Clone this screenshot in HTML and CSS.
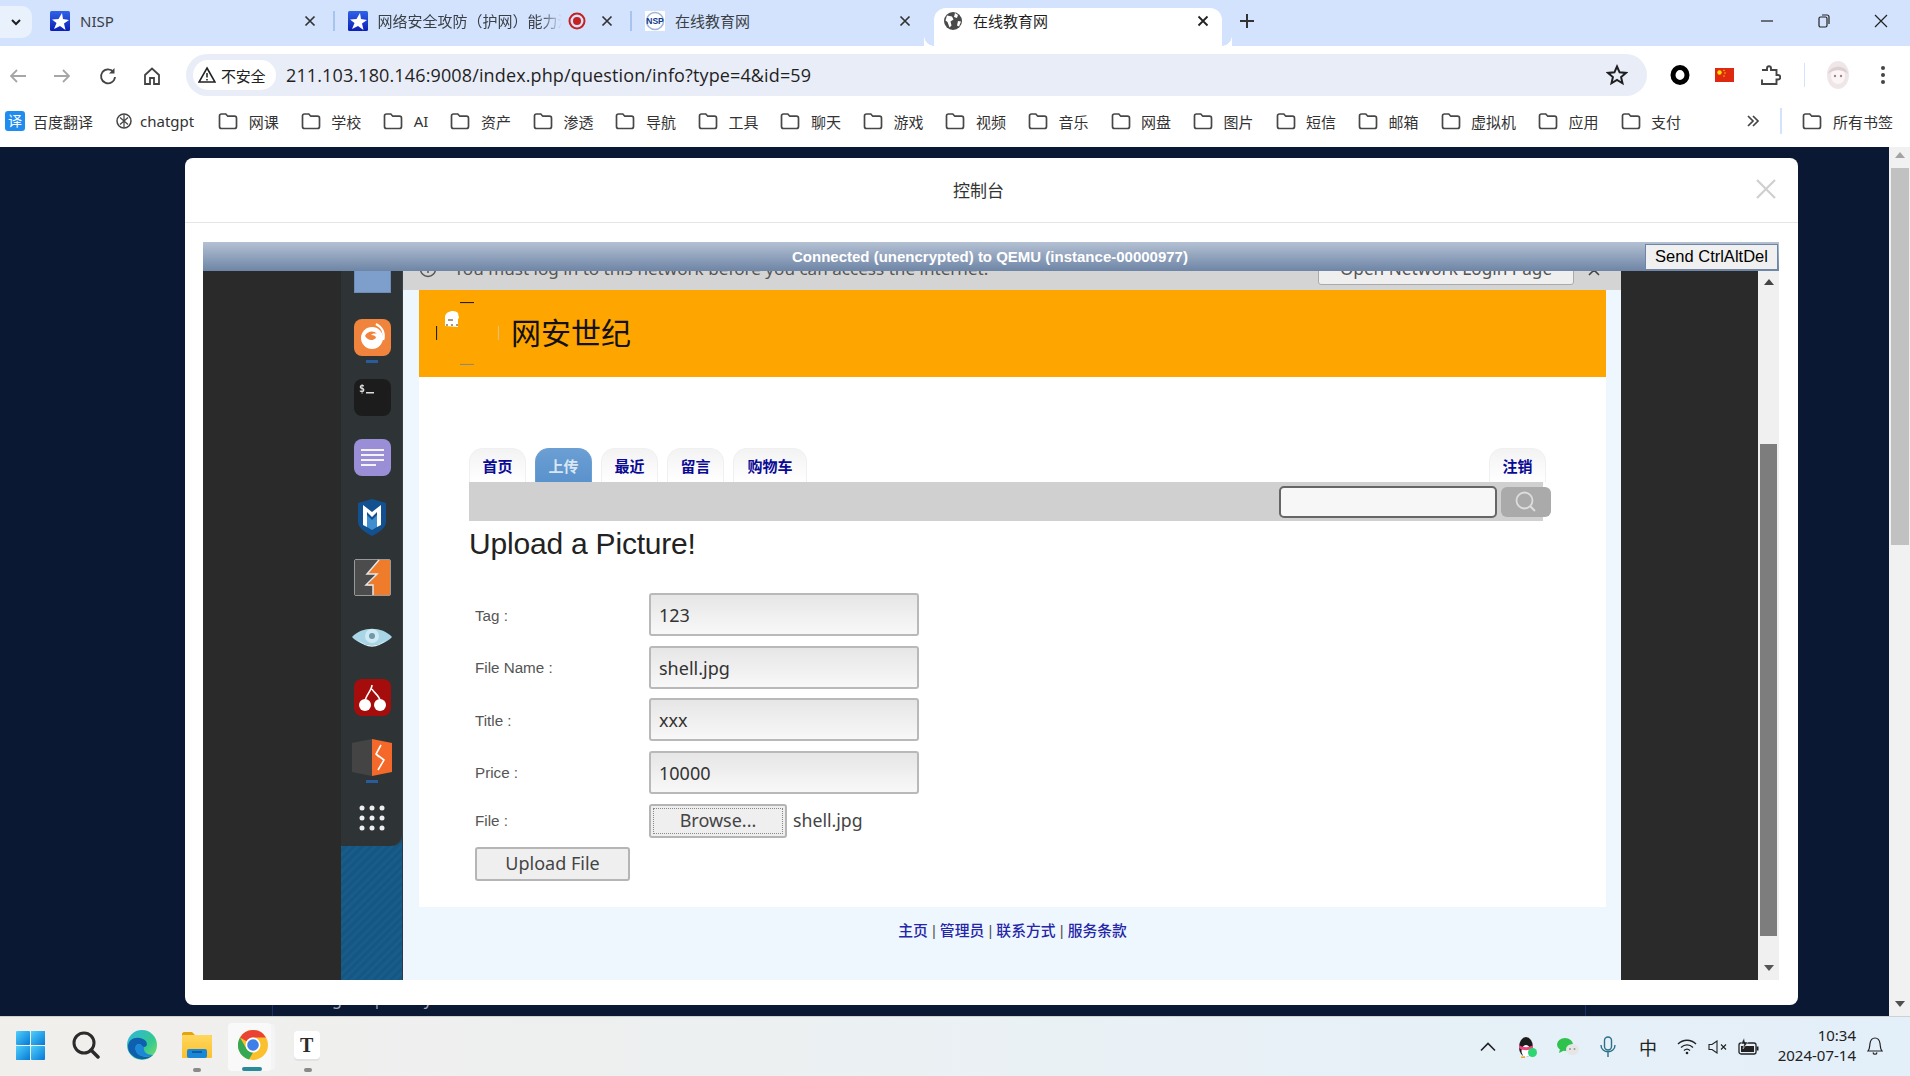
FILE: index.html
```html
<!DOCTYPE html>
<html lang="zh">
<head>
<meta charset="utf-8">
<title>在线教育网</title>
<link rel="stylesheet" href="styles.css">
</head>
<body>
<svg class="defs" width="0" height="0">
  <defs>
    <linearGradient id="nisp" x1="0" y1="0" x2="0" y2="1"><stop offset="0" stop-color="#2f63e8"/><stop offset="1" stop-color="#0c1fb8"/></linearGradient>
    <linearGradient id="win" x1="0" y1="0" x2="1" y2="1"><stop offset="0" stop-color="#4fd0fb"/><stop offset="1" stop-color="#0678d6"/></linearGradient>
    <linearGradient id="edge" x1="0" y1="0" x2="1" y2="1"><stop offset="0" stop-color="#2fb5e0"/><stop offset=".6" stop-color="#35c98f"/><stop offset="1" stop-color="#7fe06a"/></linearGradient>
    <linearGradient id="fold" x1="0" y1="0" x2="0" y2="1"><stop offset="0" stop-color="#ffd75e"/><stop offset="1" stop-color="#fbc02d"/></linearGradient>
    <symbol id="i-nisp" viewBox="0 0 20 20"><rect width="20" height="20" rx="1.5" fill="url(#nisp)"/><path d="M12 2l1 6 6 1-5 3.500 1.500 6.500-5.500-4-6 3 2.500-6L2 8.500l6.500-.5z" fill="#fff"/></symbol>
    <symbol id="i-folder" viewBox="0 0 20 18"><path d="M1.500 4C1.500 2.800 2.300 2 3.500 2h4.300l2 2.200h6.700c1.200 0 2 .8 2 2V14.500c0 1.200-.8 2-2 2h-13c-1.200 0-2-.8-2-2z" fill="none" stroke="#474747" stroke-width="1.700"/></symbol>
  </defs>
</svg>

<div class="browser">
  <div class="tabstrip">
    <div class="tab-menu"><svg width="14" height="14" viewBox="0 0 14 14"><path d="M3 5l4 4 4-4" fill="none" stroke="#1f1f1f" stroke-width="2"/></svg></div>
    <div class="tab">
      <svg class="fav" width="20" height="20"><use href="#i-nisp"/></svg>
      <span class="tab-title">NISP</span>
      <svg class="tab-x" width="12" height="12" viewBox="0 0 12 12"><path d="M1.500 1.500l9 9M10.500 1.500l-9 9" stroke="#333" stroke-width="1.700"/></svg>
    </div>
    <i class="tab-sep"></i>
    <div class="tab">
      <svg class="fav" width="20" height="20"><use href="#i-nisp"/></svg>
      <span class="tab-title tab-fade">网络安全攻防（护网）能力演练</span>
      <svg class="rec" width="18" height="18" viewBox="0 0 18 18"><circle cx="9" cy="9" r="7.500" fill="none" stroke="#c5221f" stroke-width="2"/><circle cx="9" cy="9" r="4" fill="#c5221f"/></svg>
      <svg class="tab-x tab-x-near" width="12" height="12" viewBox="0 0 12 12"><path d="M1.500 1.500l9 9M10.500 1.500l-9 9" stroke="#333" stroke-width="1.700"/></svg>
    </div>
    <i class="tab-sep"></i>
    <div class="tab">
      <svg class="fav" width="20" height="20" viewBox="0 0 20 20"><rect width="20" height="20" fill="#fff"/><circle cx="10" cy="10" r="8.500" fill="none" stroke="#9fb6d8" stroke-width="1.500"/><text x="10" y="13" font-size="8.500" font-weight="700" text-anchor="middle" fill="#0f3a8c" font-family="Liberation Sans">NSP</text></svg>
      <span class="tab-title">在线教育网</span>
      <svg class="tab-x" width="12" height="12" viewBox="0 0 12 12"><path d="M1.500 1.500l9 9M10.500 1.500l-9 9" stroke="#333" stroke-width="1.700"/></svg>
    </div>
    <i class="tab-gap"></i>
    <div class="tab tab-active">
      <svg class="fav fav-globe" width="18" height="18" viewBox="0 0 18 18"><circle cx="9" cy="9" r="9" fill="#4a4a4a"/><path d="M3 3.500l5 1 1.500 3-3 2 1 4-2 2-2-5.500-2-1.500zM11 1l3 2-1 3-3-1zM14 9l3 .500-2 5-2-1z" fill="#fff"/></svg>
      <span class="tab-title">在线教育网</span>
      <svg class="tab-x" width="12" height="12" viewBox="0 0 12 12"><path d="M1.500 1.500l9 9M10.500 1.500l-9 9" stroke="#222" stroke-width="1.800"/></svg>
    </div>
    <div class="tab-new"><svg width="16" height="16" viewBox="0 0 16 16"><path d="M8 1v14M1 8h14" stroke="#333" stroke-width="2"/></svg></div>
    <div class="win-ctrls">
      <svg width="14" height="14" viewBox="0 0 14 14"><path d="M1 7h12" stroke="#222" stroke-width="1.200"/></svg>
      <svg width="14" height="16" viewBox="0 0 14 16"><rect x="2" y="4" width="8" height="10" rx="1.500" fill="none" stroke="#222" stroke-width="1.200"/><path d="M5 2h5c1.500 0 2 .5 2 2v7" fill="none" stroke="#222" stroke-width="1.200"/></svg>
      <svg width="14" height="14" viewBox="0 0 14 14"><path d="M1 1l12 12M13 1L1 13" stroke="#222" stroke-width="1.200"/></svg>
    </div>
  </div>

  <div class="toolbar">
    <svg class="nav-ic nav-back" width="20" height="20" viewBox="0 0 20 20"><path d="M18 10H3M9 4l-6 6 6 6" fill="none" stroke="#a6a6a6" stroke-width="1.800"/></svg>
    <svg class="nav-ic nav-fwd" width="20" height="20" viewBox="0 0 20 20"><path d="M2 10h15M11 4l6 6-6 6" fill="none" stroke="#a6a6a6" stroke-width="1.800"/></svg>
    <svg class="nav-ic nav-reload" width="20" height="20" viewBox="0 0 20 20"><path d="M15.500 6A7 7 0 1 0 17 11" fill="none" stroke="#444" stroke-width="1.800"/><path d="M16.500 2v5.500H11z" fill="#444"/></svg>
    <svg class="nav-ic nav-home" width="20" height="20" viewBox="0 0 20 20"><path d="M3 9l7-6.500L17 9v9h-5v-6H8v6H3z" fill="none" stroke="#444" stroke-width="1.800"/></svg>
    <div class="omnibox">
      <div class="chip">
        <svg width="18" height="18" viewBox="0 0 18 18"><path d="M9 2l8 14H1z" fill="none" stroke="#222" stroke-width="1.600"/><path d="M9 7v4.500M9 13v1.500" stroke="#222" stroke-width="1.500"/></svg>
        <span>不安全</span>
      </div>
      <span class="url">211.103.180.146:9008/index.php/question/info?type=4&amp;id=59</span>
      <svg class="star" width="22" height="22" viewBox="0 0 22 22"><path d="M11 2.500l2.600 5.800 6.300.6-4.800 4.200 1.400 6.200L11 16l-5.500 3.300 1.400-6.200L2.100 8.900l6.300-.6z" fill="none" stroke="#1f1f1f" stroke-width="2"/></svg>
    </div>
    <div class="ext">
      <svg class="ext-ring" width="20" height="20" viewBox="0 0 20 20"><ellipse cx="10" cy="10" rx="7" ry="7.500" fill="none" stroke="#000" stroke-width="5"/></svg>
      <svg class="ext-flag" width="19" height="14" viewBox="0 0 19 14"><rect width="19" height="14" fill="#de2910"/><circle cx="4.500" cy="4.500" r="2.200" fill="#ffde00"/><circle cx="9" cy="2.500" r=".7" fill="#ffde00"/><circle cx="10" cy="5" r=".7" fill="#ffde00"/><circle cx="9" cy="8" r=".7" fill="#ffde00"/></svg>
      <svg class="ext-puzzle" width="22" height="22" viewBox="0 0 22 22"><path d="M3 6h5V4.500c0-3 4-3 4 0V6h5.500v5H19c3 0 3 4.500 0 4.500h-1.500V20H3v-4.500" fill="none" stroke="#444" stroke-width="1.900"/></svg>
      <i class="ext-sep"></i>
      <svg class="ext-avatar" width="26" height="30" viewBox="0 0 26 30"><ellipse cx="13" cy="15" rx="11" ry="14" fill="#efe6e8"/><ellipse cx="13" cy="16" rx="7" ry="8" fill="#fbf6f6"/><circle cx="10" cy="16" r="1.200" fill="#b27a88"/><circle cx="16" cy="16" r="1.200" fill="#b27a88"/><path d="M3 14c2-9 18-10 20 0-5-5-15-5-20 0z" fill="#ddd0d3"/></svg>
      <svg class="ext-menu" width="6" height="20" viewBox="0 0 6 20"><circle cx="3" cy="3" r="2" fill="#444"/><circle cx="3" cy="10" r="2" fill="#444"/><circle cx="3" cy="17" r="2" fill="#444"/></svg>
    </div>
  </div>

  <div class="bookmarks">
    <div class="bm bm-first"><span class="bm-yi">译</span><span>百度翻译</span></div>
    <div class="bm bm-gpt"><svg width="18" height="18" viewBox="0 0 18 18"><circle cx="9" cy="9" r="7" fill="none" stroke="#444" stroke-width="1.500"/><path d="M5 5.500l8 7M13 5.500l-8 7M9 2.500v13" stroke="#444" stroke-width="1.200"/></svg><span>chatgpt</span></div>
    <div class="bm"><svg width="20" height="18"><use href="#i-folder"/></svg><span>网课</span></div>
    <div class="bm"><svg width="20" height="18"><use href="#i-folder"/></svg><span>学校</span></div>
    <div class="bm"><svg width="20" height="18"><use href="#i-folder"/></svg><span>AI</span></div>
    <div class="bm"><svg width="20" height="18"><use href="#i-folder"/></svg><span>资产</span></div>
    <div class="bm"><svg width="20" height="18"><use href="#i-folder"/></svg><span>渗透</span></div>
    <div class="bm"><svg width="20" height="18"><use href="#i-folder"/></svg><span>导航</span></div>
    <div class="bm"><svg width="20" height="18"><use href="#i-folder"/></svg><span>工具</span></div>
    <div class="bm"><svg width="20" height="18"><use href="#i-folder"/></svg><span>聊天</span></div>
    <div class="bm"><svg width="20" height="18"><use href="#i-folder"/></svg><span>游戏</span></div>
    <div class="bm"><svg width="20" height="18"><use href="#i-folder"/></svg><span>视频</span></div>
    <div class="bm"><svg width="20" height="18"><use href="#i-folder"/></svg><span>音乐</span></div>
    <div class="bm"><svg width="20" height="18"><use href="#i-folder"/></svg><span>网盘</span></div>
    <div class="bm"><svg width="20" height="18"><use href="#i-folder"/></svg><span>图片</span></div>
    <div class="bm"><svg width="20" height="18"><use href="#i-folder"/></svg><span>短信</span></div>
    <div class="bm"><svg width="20" height="18"><use href="#i-folder"/></svg><span>邮箱</span></div>
    <div class="bm"><svg width="20" height="18"><use href="#i-folder"/></svg><span>虚拟机</span></div>
    <div class="bm"><svg width="20" height="18"><use href="#i-folder"/></svg><span>应用</span></div>
    <div class="bm"><svg width="20" height="18"><use href="#i-folder"/></svg><span>支付</span></div>
    <svg class="bm-more" width="14" height="14" viewBox="0 0 14 14"><path d="M2 2l5 5-5 5M7 2l5 5-5 5" fill="none" stroke="#444" stroke-width="1.700"/></svg>
    <i class="bm-sep"></i>
    <div class="bm bm-all"><svg width="20" height="18"><use href="#i-folder"/></svg><span>所有书签</span></div>
  </div>

  <div class="viewport">
    <div class="behind">
      <i class="behind-line behind-l"></i>
      <span class="behind-text">gt&nbsp;&nbsp;&nbsp;&nbsp;&nbsp;&nbsp;|=&nbsp;&nbsp;&nbsp;&nbsp;&nbsp;&nbsp;&nbsp;&nbsp;y</span>
      <i class="behind-line behind-r"></i>
    </div>
    <div class="page-scroll">
      <svg class="arrow" width="12" height="8" viewBox="0 0 12 8"><path d="M6 1l5 6H1z" fill="#a3a3a3"/></svg>
      <div class="page-thumb"></div>
      <svg class="arrow arrow-end" width="12" height="8" viewBox="0 0 12 8"><path d="M6 7L1 1h10z" fill="#505050"/></svg>
    </div>

    <div class="modal">
      <div class="modal-head">
        <span class="modal-title">控制台</span>
        <svg class="modal-x" width="20" height="20" viewBox="0 0 20 20"><path d="M1 1l18 18M19 1L1 19" stroke="#cfcfcf" stroke-width="2.200"/></svg>
      </div>
      <div class="modal-body">
        <div class="vnc">
          <div class="vnc-status">
            <span class="vnc-text">Connected (unencrypted) to QEMU (instance-00000977)</span>
            <button class="vnc-send">Send CtrlAltDel</button>
          </div>
          <div class="vnc-screen">
            <div class="black black-l"></div>
            <div class="dock-col">
              <div class="dock">
                <div class="dock-item dock-first"><div class="dock-files"></div></div>
                <div class="dock-item dock-run">
                  <svg width="37" height="37" viewBox="0 0 37 37"><rect width="37" height="37" rx="8" fill="#f0843c"/><circle cx="18" cy="19" r="11" fill="#fff"/><path d="M11 17c2-5 9-6 12-2-3-1-5 0-6 1 3 0 5 1 5 3-3 3-8 3-11-2z" fill="#f0843c"/><path d="M22 5c6 3 9 9 7 16" fill="none" stroke="#fff" stroke-width="2.500"/></svg>
                </div>
                <div class="dock-item">
                  <svg width="37" height="37" viewBox="0 0 37 37"><rect width="37" height="37" rx="8" fill="#1c1c1c"/><text x="5" y="13" font-size="10" font-weight="700" fill="#ddd" font-family="DejaVu Sans Mono">$</text><rect x="12" y="13" width="8" height="1.500" fill="#ddd"/></svg>
                </div>
                <div class="dock-item">
                  <svg width="37" height="37" viewBox="0 0 37 37"><rect width="37" height="37" rx="8" fill="#9a8fd6"/><path d="M7 11h23M7 16h23M7 21h23M7 26h15" stroke="#f4f2fb" stroke-width="2"/></svg>
                </div>
                <div class="dock-item">
                  <svg width="32" height="37" viewBox="0 0 32 37"><path d="M16 0l14 4v19c0 6-8 11-14 14C10 34 2 29 2 23V4z" fill="#12508f"/><path d="M7 26V6l9 7 9-7v20l-4 2V13l-5 5-5-5v15z" fill="#fff"/><path d="M11 16l5 5 5-5v12l-5 3-5-3z" fill="#3f8fd0"/></svg>
                </div>
                <div class="dock-item">
                  <svg width="37" height="37" viewBox="0 0 37 37"><rect x=".5" y=".5" width="36" height="36" rx="1.500" fill="#ef7c2b" stroke="#999"/><path d="M1 1h24l-12 14h10L13 27h6v9H1z" fill="#4c4c4c"/><path d="M25 1L13 15h10L12 26h7v10" fill="none" stroke="#e6e6e6" stroke-width="1.500"/></svg>
                </div>
                <div class="dock-item">
                  <svg width="40" height="22" viewBox="0 0 40 22"><path d="M0 11C10 0 30 0 40 11 30 22 10 22 0 11z" fill="#a8d6e6"/><circle cx="20" cy="10" r="7" fill="#cfeaf3"/><circle cx="20" cy="10" r="3" fill="#6f98aa"/><path d="M6 14c8 7 20 7 28 0-8 9-20 9-28 0z" fill="#e5f5fa"/></svg>
                </div>
                <div class="dock-item">
                  <svg width="37" height="37" viewBox="0 0 37 37"><rect width="37" height="37" rx="8" fill="#a50d0d"/><circle cx="11" cy="26" r="6" fill="#fff"/><circle cx="26" cy="26" r="6" fill="#fff"/><path d="M18 6c0 5-6 10-7 16M18 10c2 4 8 7 8 12" fill="none" stroke="#fff" stroke-width="1.600"/></svg>
                </div>
                <div class="dock-item dock-run">
                  <svg width="40" height="37" viewBox="0 0 40 37"><path d="M0 4l20-4v37L0 33z" fill="#444"/><path d="M20 0l20 4v29l-20 4z" fill="#f4682a"/><path d="M29 6l-5 9 8 6-6 10M24 15l3 3" fill="none" stroke="#fff" stroke-width="1.600"/></svg>
                </div>
                <div class="dock-item dock-grid">
                  <svg width="26" height="26" viewBox="0 0 26 26"><g fill="#eee"><circle cx="3" cy="3" r="2.500"/><circle cx="13" cy="3" r="2.500"/><circle cx="23" cy="3" r="2.500"/><circle cx="3" cy="13" r="2.500"/><circle cx="13" cy="13" r="2.500"/><circle cx="23" cy="13" r="2.500"/><circle cx="3" cy="23" r="2.500"/><circle cx="13" cy="23" r="2.500"/><circle cx="23" cy="23" r="2.500"/></g></svg>
                </div>
              </div>
              <div class="wallpaper"></div>
            </div>
            <div class="guest">
              <div class="notif">
                <svg class="notif-ic" width="18" height="18" viewBox="0 0 18 18"><circle cx="9" cy="9" r="7.500" fill="none" stroke="#555" stroke-width="1.500"/><path d="M9 8v5M9 5v1.500" stroke="#555" stroke-width="1.500"/></svg>
                <span class="notif-text">You must log in to this network before you can access the internet.</span>
                <button class="notif-btn">Open Network Login Page</button>
                <svg class="notif-x" width="12" height="12" viewBox="0 0 12 12"><path d="M1 1l10 10M11 1L1 11" stroke="#444" stroke-width="1.600"/></svg>
              </div>
              <div class="site">
                <header class="site-head">
                  <svg class="site-logo" width="63" height="63" viewBox="0 0 63 63"><path d="M24 .5h14" stroke="#222" stroke-width="1.200"/><path d="M.5 24v14" stroke="#222" stroke-width="1.200"/><path d="M62.500 24v14" stroke="#e2c27a" stroke-width="1.200"/><path d="M24 62.500h14" stroke="#8f8a72" stroke-width="1.200"/><path d="M9 24v-9c0-6 10-8 13-4l1 5-1 1v8z" fill="#fff"/><path d="M12 17h5v2h-5zM10 24h2v-2h-2zM15 24h2v-2h-2zM20 24h2v-2h-2z" fill="#a89a80"/></svg>
                  <h1 class="site-name">网安世纪</h1>
                </header>
                <main class="site-main">
                  <nav class="nav-tabs">
                    <a class="nt">首页</a>
                    <a class="nt nt-on">上传</a>
                    <a class="nt">最近</a>
                    <a class="nt">留言</a>
                    <a class="nt nt-wide">购物车</a>
                    <a class="nt nt-end">注销</a>
                  </nav>
                  <div class="search-bar">
                    <div class="search-input"></div>
                    <div class="search-btn"><svg width="24" height="24" viewBox="0 0 24 24"><circle cx="10.500" cy="10.500" r="8" fill="none" stroke="#ddd" stroke-width="1.800"/><path d="M16 16l5 5" stroke="#ddd" stroke-width="2"/></svg></div>
                  </div>
                  <h2 class="up-title">Upload a Picture!</h2>
                  <form class="up-form">
                    <div class="row"><label class="lb">Tag :</label><div class="field">123</div></div>
                    <div class="row"><label class="lb">File Name :</label><div class="field">shell.jpg</div></div>
                    <div class="row"><label class="lb">Title :</label><div class="field">xxx</div></div>
                    <div class="row"><label class="lb">Price :</label><div class="field">10000</div></div>
                    <div class="row row-file"><label class="lb">File :</label><div class="browse"><span class="browse-in">Browse...</span></div><span class="fname">shell.jpg</span></div>
                    <div class="upload">Upload File</div>
                  </form>
                </main>
                <footer class="site-foot">
                  <a>主页</a> | <a>管理员</a> | <a>联系方式</a> | <a>服务条款</a>
                </footer>
              </div>
            </div>
            <div class="black black-r"></div>
            <div class="guest-scroll">
              <svg class="g-arrow" width="12" height="8" viewBox="0 0 12 8"><path d="M6 1l5 6H1z" fill="#444"/></svg>
              <div class="guest-thumb"></div>
              <svg class="g-arrow" width="12" height="8" viewBox="0 0 12 8"><path d="M6 7L1 1h10z" fill="#555"/></svg>
            </div>
          </div>
        </div>
      </div>
    </div>
  </div>

  <div class="taskbar">
    <div class="tb-slot">
      <svg width="29" height="29" viewBox="0 0 29 29"><rect width="14" height="14" rx="1" fill="url(#win)"/><rect x="15" width="14" height="14" fill="url(#win)"/><rect y="15" width="14" height="14" fill="url(#win)"/><rect x="15" y="15" width="14" height="14" rx="1" fill="url(#win)"/></svg>
    </div>
    <div class="tb-slot">
      <svg width="28" height="28" viewBox="0 0 28 28"><circle cx="12" cy="12" r="10" fill="none" stroke="#2b2b2b" stroke-width="3"/><path d="M19 19l7 7" stroke="#2b2b2b" stroke-width="3.500" stroke-linecap="round"/></svg>
    </div>
    <div class="tb-slot">
      <svg width="30" height="30" viewBox="0 0 30 30"><circle cx="15" cy="15" r="15" fill="url(#edge)"/><path d="M1 17C1 8 10 6 16 9c5 2 5 8 1 8-3 0-2-3-5-3-4 0-5 6-1 10 4 3 10 4 15 1-5 5-14 6-20 1-3-2-5-5-5-9z" fill="#0f5fb0"/><path d="M12 14c3 0 2 3 5 3-1 5 3 8 9 8-5 3-11 2-15-1-4-4-3-10 1-10z" fill="#1b87d6"/></svg>
    </div>
    <div class="tb-slot tb-dot">
      <svg width="30" height="28" viewBox="0 0 30 28"><path d="M0 3c0-1 1-2 2-2h8l3 3h17v6H0z" fill="#e2a40f"/><rect y="4" width="30" height="23" rx="1" fill="url(#fold)"/><rect x="5" y="18" width="20" height="9" rx="2" fill="#1a86d8"/><path d="M10 21h10" stroke="#0a4f8f" stroke-width="1.500"/></svg>
    </div>
    <div class="tb-slot tb-active">
      <svg width="30" height="30" viewBox="0 0 30 30"><circle cx="15" cy="15" r="15" fill="#fbc02d"/><path d="M15 0a15 15 0 0 1 13 7.500H15A7.500 7.500 0 0 0 8.500 11.300L2 7.500A15 15 0 0 1 15 0z" fill="#ea4335"/><path d="M2 7.500l6.500 11.300A7.500 7.500 0 0 0 15 22.500l-4 7.100A15 15 0 0 1 2 7.500z" fill="#34a853"/><circle cx="15" cy="15" r="7.500" fill="#fff"/><circle cx="15" cy="15" r="5.800" fill="#3f7fe8"/></svg>
    </div>
    <div class="tb-slot tb-dot">
      <div class="typora">T</div>
    </div>

    <div class="tray">
      <div class="tr tr-w40"><svg width="16" height="10" viewBox="0 0 16 10"><path d="M1 8.500l7-7 7 7" fill="none" stroke="#222" stroke-width="1.600"/></svg></div>
      <div class="tr tr-w40">
        <svg width="20" height="22" viewBox="0 0 20 22"><ellipse cx="8" cy="11" rx="7" ry="10" fill="#1c1c1c"/><ellipse cx="8" cy="15" rx="4.500" ry="6" fill="#fff"/><path d="M1 9c4 3 10 3 14 0v3c-4 3-10 3-14 0z" fill="#f0457c"/><circle cx="14.500" cy="16.500" r="4.500" fill="#2ed573"/><path d="M3 20.500h4V22H3z" fill="#f5a623"/></svg>
      </div>
      <div class="tr tr-w40">
        <svg width="22" height="19" viewBox="0 0 22 19"><ellipse cx="8" cy="7.500" rx="8" ry="6.500" fill="#2fc24c"/><path d="M3 12l-1 4 5-2.500z" fill="#2fc24c"/><ellipse cx="15.500" cy="12.500" rx="6.500" ry="5.500" fill="#e6e6e6"/><circle cx="13" cy="12" r="1" fill="#999"/><circle cx="17.500" cy="12" r="1" fill="#999"/></svg>
      </div>
      <div class="tr tr-w40"><svg width="16" height="22" viewBox="0 0 16 22"><rect x="4.500" y="1" width="7" height="13" rx="3.500" fill="none" stroke="#2c7188" stroke-width="1.400"/><path d="M1 9c0 9 14 9 14 0M8 16v5" fill="none" stroke="#2c7188" stroke-width="1.400"/></svg></div>
      <div class="tr tr-w40 tr-zh">中</div>
      <div class="tr tr-w37"><svg width="20" height="16" viewBox="0 0 20 16"><path d="M1 5c5-5 13-5 18 0M4 8.500c3.500-3.500 8.500-3.500 12 0M7 11.500c2-1.800 4-1.800 6 0" fill="none" stroke="#222" stroke-width="1.300"/><circle cx="10" cy="14" r="1.300" fill="#222"/></svg></div>
      <div class="tr tr-w26"><svg width="20" height="14" viewBox="0 0 20 14"><path d="M1 4.500h3L9 1v12L4 9.500H1z" fill="none" stroke="#222" stroke-width="1.100"/><path d="M13 4.500l5 5M18 4.500l-5 5" stroke="#222" stroke-width="1.100"/></svg></div>
      <div class="tr tr-w34"><svg width="21" height="18" viewBox="0 0 21 18"><rect x="1" y="5" width="17" height="11" rx="2" fill="none" stroke="#222" stroke-width="1.300"/><rect x="3" y="8" width="13" height="6" fill="#222"/><rect x="18.500" y="8.500" width="2" height="4" fill="#222"/><path d="M6 0L3 6h3l-1 5 5-7H7z" fill="#222" stroke="#eaf2f8" stroke-width=".5"/></svg></div>
      <div class="clock"><div>10:34</div><div>2024-07-14</div></div>
      <div class="tr tr-w38"><svg width="16" height="19" viewBox="0 0 16 19"><path d="M1 14c2-2 1.500-5 2-7.500C3.500 3 5.500 1 8 1s4.500 2 5 5.500c.5 2.500 0 5.500 2 7.500z" fill="none" stroke="#222" stroke-width="1.200"/><path d="M6 15.500c.5 2.300 3.500 2.300 4 0" fill="none" stroke="#222" stroke-width="1.200"/></svg></div>
    </div>
  </div>
</div>
</body>
</html>
```
FILE: styles.css
```css
* { box-sizing: border-box; }
html, body { margin: 0; padding: 0; }
body {
  width: 1910px;
  height: 1076px;
  overflow: hidden;
  font-family: "Noto Sans", "Noto Sans CJK SC", sans-serif;
  color: #1f1f1f;
  background: #fff;
}
.defs { position: absolute; }
.browser { display: flex; flex-direction: column; height: 1076px; }

/* tab strip */
.tabstrip {
  height: 46px;
  flex: none;
  background: #d3e3fd;
  display: flex;
  align-items: flex-end;
  position: relative;
}
.tab-menu {
  width: 32px;
  height: 32px;
  margin: 0 9px 8px 0;
  align-self: flex-end;
  background: #e9f1fd;
  border-radius: 0 10px 10px 0;
  display: flex;
  align-items: center;
  justify-content: center;
}
.tab {
  width: 288px;
  height: 38px;
  display: flex;
  align-items: center;
  padding: 0 0 12px 9px;
  font-size: 15px;
  color: #333;
  flex: none;
  position: relative;
}
.fav { flex: none; margin-right: 10px; }
.fav-globe { margin: 0 11.400px 0 1px; }
.tab-title { flex: 1; white-space: nowrap; overflow: hidden; color: #3a3f46; line-height: 20px; }
.tab-fade {
  flex: none;
  width: 184px;
  -webkit-mask-image: linear-gradient(90deg, #000 88%, transparent);
  mask-image: linear-gradient(90deg, #000 88%, transparent);
}
.rec { flex: none; margin: 0 0 0 6px; }
.tab-x { flex: none; margin: 0 13px 0 4px; }
.tab-x-near { margin-left: 15px; }
.tab-sep {
  flex: none;
  width: 2px;
  height: 20px;
  margin: 0 3.75px 15px;
  background: #a7c4ee;
}
.tab-gap { flex: none; width: 9.500px; }
.tab-active {
  background: #fff;
  border-radius: 12px 12px 0 0;
  color: #1f1f1f;
}
.tab-active .tab-title { color: #1f1f1f; }
.tab-active::before, .tab-active::after {
  content: "";
  position: absolute;
  bottom: 0;
  width: 10px;
  height: 10px;
  background: radial-gradient(circle at 0 0, #d3e3fd 9.500px, #fff 10px);
}
.tab-active::after { right: -10px; }
.tab-active::before {
  left: -10px;
  background: radial-gradient(circle at 100% 0, #d3e3fd 9.500px, #fff 10px);
}
.tab-new { margin: 0 0 17px 17px; width: 16px; height: 16px; align-self: flex-end; display: flex; }
.win-ctrls {
  margin-left: auto;
  align-self: flex-start;
  display: flex;
  align-items: center;
  height: 42px;
  gap: 43px;
  padding-right: 22px;
}

/* toolbar */
.toolbar {
  height: 54px;
  flex: none;
  background: #fff;
  display: flex;
  align-items: flex-start;
  padding-top: 8px;
}
.nav-ic { flex: none; margin-top: 12px; }
.nav-back { margin-left: 8px; }
.nav-fwd { margin-left: 24px; }
.nav-reload { margin-left: 26px; }
.nav-home { margin-left: 24px; }
.omnibox {
  width: 1461px;
  height: 42px;
  margin-left: 24px;
  flex: none;
  background: #e9edf7;
  border-radius: 21px;
  display: flex;
  align-items: center;
  padding-left: 7px;
}
.chip {
  width: 83px;
  height: 30px;
  background: #fff;
  border-radius: 15px;
  display: flex;
  align-items: center;
  padding-left: 5px;
  gap: 5px;
  font-size: 15px;
  letter-spacing: -.3px;
  color: #222;
  flex: none;
}
.url { margin-left: 10px; font-size: 18px; letter-spacing: .13px; color: #1f1f1f; white-space: nowrap; font-family: "Open Sans", "Noto Sans", sans-serif; }
.star { margin-left: auto; margin-right: 19px; }
.ext { display: flex; align-items: center; height: 42px; flex: none; }
.ext-ring { margin-left: 23px; }
.ext-flag { margin-left: 25px; }
.ext-puzzle { margin-left: 25px; }
.ext-sep { width: 1px; height: 24px; margin-left: 23px; background: #d3e3fd; }
.ext-avatar { margin-left: 20px; }
.ext-menu { margin-left: 29px; }

/* bookmarks */
.bookmarks {
  height: 47px;
  flex: none;
  background: #fff;
  display: flex;
  align-items: center;
  padding: 0 17px 5px 0;
  font-size: 15px;
  color: #333;
}
.bm { display: flex; align-items: center; gap: 10.500px; flex: none; margin-right: 22px; white-space: nowrap; }
.bm svg { flex: none; }
.bm-first { margin-left: 5px; margin-right: 22px; gap: 8px; }
.bm-yi { width: 20px; height: 20px; background: #1f8cf0; color: #fff; border-radius: 3px; font-size: 14px; line-height: 20px; text-align: center; }
.bm-gpt { gap: 7px; margin-right: 24px; }
.bm-more { margin-left: auto; flex: none; }
.bm-sep { width: 2px; height: 26px; margin-left: 20px; background: #d3e3fd; flex: none; }
.bm-all { margin-left: 20px; margin-right: 0; }

/* viewport */
.viewport {
  flex: 1;
  position: relative;
  background: #0a1833;
  overflow: hidden;
}
.behind { position: absolute; left: 0; right: 21px; bottom: 0; height: 22px; }
.behind-line { position: absolute; bottom: 0; height: 22px; width: 1px; background: #1b2f6b; }
.behind-l { left: 272px; }
.behind-r { left: 1585px; }
.behind-text { position: absolute; left: 332px; bottom: 6px; font-size: 16px; line-height: 22px; color: #a9adb8; white-space: pre; }
.page-scroll {
  position: absolute;
  right: 0;
  top: 0;
  bottom: 0;
  width: 21px;
  background: #f1f1f1;
  display: flex;
  flex-direction: column;
  align-items: center;
  padding: 4px 0 8px;
}
.arrow { flex: none; }
.arrow-end { margin-top: auto; }
.page-thumb { width: 18px; height: 377px; margin-top: 9px; background: #c1c1c1; }

/* modal */
.modal {
  position: absolute;
  left: 185px;
  top: 11px;
  width: 1613px;
  height: 847px;
  background: #fff;
  border-radius: 8px;
  display: flex;
  flex-direction: column;
}
.modal-head {
  height: 65px;
  flex: none;
  border-bottom: 1px solid #e5e5e5;
  display: flex;
  align-items: center;
  justify-content: center;
  position: relative;
}
.modal-title { font-size: 17px; color: #333; margin: 0 26px 2px 0; }
.modal-x { position: absolute; right: 22px; top: 21px; }
.modal-body { flex: 1; padding: 19px 19px 25px 18px; }

/* vnc */
.vnc { height: 100%; display: flex; flex-direction: column; font-family: "Liberation Sans", Arial, sans-serif; }
.vnc-status {
  height: 29px;
  flex: none;
  background: linear-gradient(#b4c1d3, #6e85a6);
  position: relative;
  display: flex;
  align-items: center;
  justify-content: flex-end;
  padding-right: 1px;
}
.vnc-text {
  position: absolute;
  left: 197px;
  width: 1180px;
  text-align: center;
  font-size: 15px;
  font-weight: 700;
  color: #fff;
}
.vnc-send {
  width: 133px;
  height: 26px;
  background: #f0f0f0;
  border: 1px solid #6e85a6;
  font: 16.500px "Liberation Sans", Arial, sans-serif;
  color: #000;
  padding: 0;
  position: relative;
}
.vnc-screen { flex: 1; display: flex; min-height: 0; filter: blur(.35px); }
.black { background: #2a2a2a; flex: none; }
.black-l { width: 138px; }
.black-r { width: 137px; }
.dock-col { width: 62px; flex: none; display: flex; flex-direction: column; overflow: hidden; }
.dock {
  height: 575px;
  flex: none;
  background: #2e3436;
  border-radius: 0 0 12px 0;
  overflow: hidden;
  display: flex;
  flex-direction: column;
  box-shadow: inset -1px 0 0 #3a4144;
}
.wallpaper {
  flex: 1;
  margin-top: -14px;
  background: repeating-linear-gradient(135deg, #155782 0 3px, #175c8a 3px 6px);
  position: relative;
  z-index: -1;
  border-right: 1px solid #2d3a44;
}
.dock-item {
  height: 60px;
  flex: none;
  display: flex;
  align-items: center;
  justify-content: center;
  position: relative;
}
.dock-first { margin-top: -24px; padding-bottom: 5px; }
.dock-files { width: 37px; height: 37px; background: #7e9fcc; border: 1px solid #6c8db8; }
.dock-run::after {
  content: "";
  position: absolute;
  bottom: 4px;
  left: 25px;
  width: 12px;
  height: 3px;
  background: #2a5c9c;
}
.dock-grid { padding-top: 2px; }

.guest { width: 1218px; flex: none; display: flex; flex-direction: column; background: #eef6fe; }
.notif {
  height: 19px;
  flex: none;
  background: #d4d4d4;
  display: flex;
  align-items: flex-end;
  overflow: hidden;
  color: #555;
  font-family: "Noto Sans", sans-serif;
  font-size: 17.100px;
}
.notif-ic { flex: none; margin: 0 0 12px 16px; }
.notif-text { flex: none; margin: 0 0 11px 17px; line-height: 20px; white-space: nowrap; }
.notif-btn {
  width: 256px;
  height: 34px;
  flex: none;
  margin: 0 0 5px auto;
  background: #efefef;
  border: 1px solid #aaa;
  border-radius: 3px;
  color: #555;
  font: 17.200px "Noto Sans", sans-serif;
  padding: 0;
}
.notif-x { flex: none; margin: 0 21px 14px 14px; }
.site { flex: 1; display: flex; flex-direction: column; padding: 0 15px 0 16px; }
.site-head {
  height: 87px;
  flex: none;
  background: #ffa500;
  display: flex;
  align-items: center;
  padding-left: 17px;
}
.site-logo { flex: none; }
.site-name {
  margin: 0 0 5px 12px;
  font: 400 30px "Noto Sans CJK SC", sans-serif;
  color: #111;
}
.site-main { height: 530px; flex: none; background: #fff; padding: 71px 0 0 50px; font-family: "Liberation Sans", Arial, sans-serif; }
.nav-tabs { display: flex; gap: 9px; width: 1077px; height: 34px; }
.nt {
  width: 57px;
  height: 34px;
  flex: none;
  border: 1px solid #f0f0f0;
  border-bottom: 0;
  border-radius: 14px 14px 0 0;
  background: linear-gradient(#f3f3f3, #fff);
  text-align: center;
  font: 700 15px/34px "Noto Sans CJK SC", sans-serif;
  color: #0a0a96;
}
.nt-wide { width: 74px; }
.nt-on { background: linear-gradient(#6b9fd4, #5a92cc); color: #d9e6f3; border-color: #6b9fd4; }
.nt-end { margin-left: auto; }
.search-bar {
  width: 1074px;
  height: 39px;
  background: #d0d0d0;
  display: flex;
  align-items: center;
  justify-content: flex-end;
  gap: 4px;
  padding-top: 0;
}
.search-input { width: 218px; height: 32px; background: #f7f7f7; border: 2px solid #666; border-radius: 5px; flex: none; }
.search-btn {
  width: 50px;
  height: 30px;
  flex: none;
  margin-right: -8px;
  background: #aaa;
  border-radius: 6px;
  display: flex;
  align-items: center;
  justify-content: center;
}
.up-title { margin: 3px 0 29px; font: 400 30px/40px "Liberation Sans", Arial, sans-serif; letter-spacing: -.2px; color: #222; }
.up-form { display: flex; flex-direction: column; padding-left: 6px; }
.row { display: flex; align-items: center; margin-bottom: 9.670px; }
.lb { width: 174px; flex: none; padding-top: 2px; font-size: 15.200px; line-height: 20px; color: #555; }
.field {
  width: 270px;
  height: 43px;
  flex: none;
  border: 2px solid #b9b9b9;
  border-radius: 3px;
  background: linear-gradient(#e6e6e6, #f8f8f8);
  padding-left: 8px;
  font: 18px/41px "Noto Sans", sans-serif;
  color: #333;
}
.row-file { margin-bottom: 9px; }
.row-file .lb { padding-top: 0; }
.browse {
  width: 138px;
  height: 34px;
  flex: none;
  border: 2px solid #b5b5b5;
  border-radius: 3px;
  background: #efefef;
  padding: 2px;
}
.browse-in {
  display: block;
  height: 26px;
  border: 1px dotted #888;
  text-align: center;
  font: 18px/22px "Noto Sans", sans-serif;
  color: #444;
}
.fname { margin: 0 0 2px 6px; font: 17.700px "Noto Sans", sans-serif; color: #444; }
.upload {
  width: 155px;
  height: 34px;
  border: 2px solid #b5b5b5;
  border-radius: 3px;
  background: #efefef;
  text-align: center;
  font: 18px/29px "Noto Sans", sans-serif;
  color: #444;
}
.site-foot {
  flex: 1;
  padding-top: 14px;
  text-align: center;
  font: 14.800px/18px "Liberation Sans", "Noto Sans CJK SC", sans-serif;
  color: #555;
}
.site-foot a { color: #2525a8; font-weight: 500; font-family: "Noto Sans CJK SC", sans-serif; }
.guest-scroll {
  width: 21px;
  flex: none;
  background: #f0f0f0;
  display: flex;
  flex-direction: column;
  align-items: center;
  padding: 7px 0 8px;
}
.g-arrow { flex: none; }
.guest-thumb { width: 17px; flex: 1; margin: 158px 0 28px; background: #7d7d7d; }

/* taskbar */
.taskbar {
  height: 60px;
  flex: none;
  border-top: 1px solid #d0d0d0;
  background: linear-gradient(90deg, #f1efec 0%, #edf0f0 35%, #e9f1f6 60%, #e3eff9 100%);
  display: flex;
  align-items: center;
  padding-left: 3px;
}
.tb-slot {
  width: 55.500px;
  height: 48px;
  flex: none;
  display: flex;
  align-items: center;
  justify-content: center;
  position: relative;
  padding-bottom: 3px;
}
.tb-dot::after {
  content: "";
  position: absolute;
  bottom: -1px;
  left: 50%;
  margin-left: -4px;
  width: 8px;
  height: 4px;
  border-radius: 2px;
  background: #8a8a8a;
}
.tb-active { background: none; }
.tb-active::before {
  content: "";
  position: absolute;
  left: 3px;
  top: 0;
  width: 43px;
  height: 48px;
  border-radius: 4px;
  background: #f9f9f9;
  box-shadow: 5px 0 0 -1px #f4f4f4;
  z-index: 0;
}
.tb-active svg { position: relative; }
.tb-active::after {
  content: "";
  position: absolute;
  bottom: 0;
  left: 17px;
  width: 20px;
  height: 4px;
  border-radius: 2px;
  background: #2a8a9a;
}
.typora {
  width: 26px;
  height: 28px;
  margin-right: 3px;
  background: #fff;
  border-radius: 4px;
  box-shadow: 0 2px 0 #e2e2e2;
  text-align: center;
  font: 700 20px/28px "Liberation Serif", serif;
  color: #2b2b2b;
}
.tray { margin-left: auto; display: flex; align-items: center; padding-right: 16px; height: 100%; }
.tr { display: flex; align-items: center; justify-content: center; flex: none; height: 30px; }
.tr-w40 { width: 40px; }
.tr-w37 { width: 37px; }
.tr-w26 { width: 26px; }
.tr-w34 { width: 34px; }
.tr-w38 { width: 38px; }
.tr-zh { font: 18px "Noto Sans CJK SC", sans-serif; color: #222; }
.clock {
  width: 91px;
  text-align: right;
  flex: none;
  font: 15px/20px "Noto Sans", sans-serif;
  color: #222;
  margin-top: -3px;
}
```
